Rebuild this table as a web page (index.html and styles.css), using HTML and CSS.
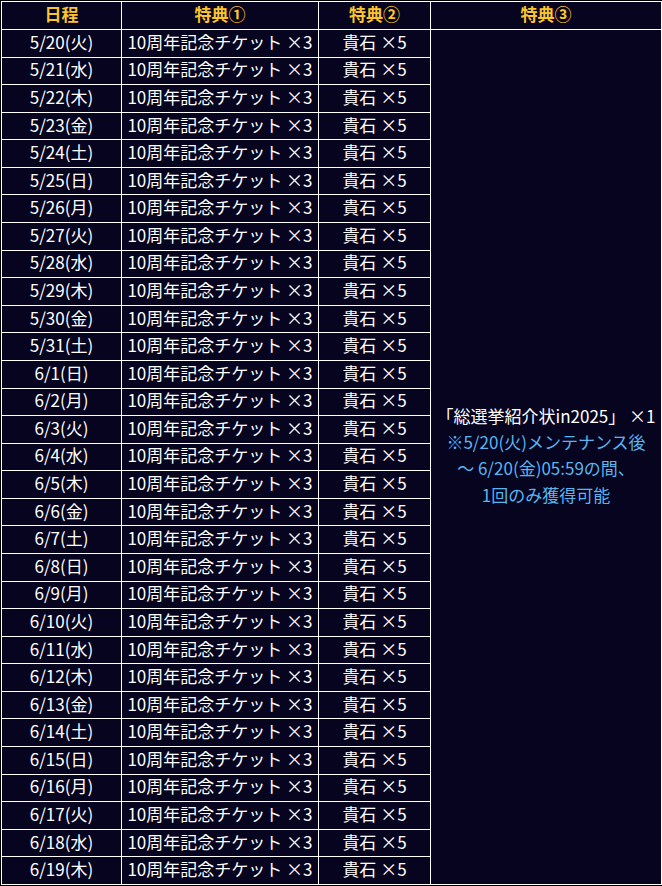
FILE: index.html
```html
<!DOCTYPE html>
<html lang="ja">
<head>
<meta charset="utf-8">
<title>特典一覧</title>
<link rel="stylesheet" href="styles.css">
</head>
<body>
<table class="bonus">
<colgroup><col class="c1"><col class="c2"><col class="c3"><col class="c4"></colgroup>
<thead>
<tr><th>日程</th><th>特典①</th><th>特典②</th><th>特典③</th></tr>
</thead>
<tbody>
<tr><td>5/20(火)</td><td>10周年記念チケット ×3</td><td>貴石 ×5</td><td class="special" rowspan="31"><span class="item">「総選挙紹介状in2025」 ×1</span><br><span class="note">※5/20(火)メンテナンス後<br>～ 6/20(金)05:59の間、<br>1回のみ獲得可能</span></td></tr>
<tr><td>5/21(水)</td><td>10周年記念チケット ×3</td><td>貴石 ×5</td></tr>
<tr><td>5/22(木)</td><td>10周年記念チケット ×3</td><td>貴石 ×5</td></tr>
<tr><td>5/23(金)</td><td>10周年記念チケット ×3</td><td>貴石 ×5</td></tr>
<tr><td>5/24(土)</td><td>10周年記念チケット ×3</td><td>貴石 ×5</td></tr>
<tr><td>5/25(日)</td><td>10周年記念チケット ×3</td><td>貴石 ×5</td></tr>
<tr><td>5/26(月)</td><td>10周年記念チケット ×3</td><td>貴石 ×5</td></tr>
<tr><td>5/27(火)</td><td>10周年記念チケット ×3</td><td>貴石 ×5</td></tr>
<tr><td>5/28(水)</td><td>10周年記念チケット ×3</td><td>貴石 ×5</td></tr>
<tr><td>5/29(木)</td><td>10周年記念チケット ×3</td><td>貴石 ×5</td></tr>
<tr><td>5/30(金)</td><td>10周年記念チケット ×3</td><td>貴石 ×5</td></tr>
<tr><td>5/31(土)</td><td>10周年記念チケット ×3</td><td>貴石 ×5</td></tr>
<tr><td>6/1(日)</td><td>10周年記念チケット ×3</td><td>貴石 ×5</td></tr>
<tr><td>6/2(月)</td><td>10周年記念チケット ×3</td><td>貴石 ×5</td></tr>
<tr><td>6/3(火)</td><td>10周年記念チケット ×3</td><td>貴石 ×5</td></tr>
<tr><td>6/4(水)</td><td>10周年記念チケット ×3</td><td>貴石 ×5</td></tr>
<tr><td>6/5(木)</td><td>10周年記念チケット ×3</td><td>貴石 ×5</td></tr>
<tr><td>6/6(金)</td><td>10周年記念チケット ×3</td><td>貴石 ×5</td></tr>
<tr><td>6/7(土)</td><td>10周年記念チケット ×3</td><td>貴石 ×5</td></tr>
<tr><td>6/8(日)</td><td>10周年記念チケット ×3</td><td>貴石 ×5</td></tr>
<tr><td>6/9(月)</td><td>10周年記念チケット ×3</td><td>貴石 ×5</td></tr>
<tr><td>6/10(火)</td><td>10周年記念チケット ×3</td><td>貴石 ×5</td></tr>
<tr><td>6/11(水)</td><td>10周年記念チケット ×3</td><td>貴石 ×5</td></tr>
<tr><td>6/12(木)</td><td>10周年記念チケット ×3</td><td>貴石 ×5</td></tr>
<tr><td>6/13(金)</td><td>10周年記念チケット ×3</td><td>貴石 ×5</td></tr>
<tr><td>6/14(土)</td><td>10周年記念チケット ×3</td><td>貴石 ×5</td></tr>
<tr><td>6/15(日)</td><td>10周年記念チケット ×3</td><td>貴石 ×5</td></tr>
<tr><td>6/16(月)</td><td>10周年記念チケット ×3</td><td>貴石 ×5</td></tr>
<tr><td>6/17(火)</td><td>10周年記念チケット ×3</td><td>貴石 ×5</td></tr>
<tr><td>6/18(水)</td><td>10周年記念チケット ×3</td><td>貴石 ×5</td></tr>
<tr><td>6/19(木)</td><td>10周年記念チケット ×3</td><td>貴石 ×5</td></tr>
</tbody>
</table>
</body>
</html>
```

FILE: styles.css
```css
html, body {
  margin: 0;
  padding: 0;
  background: #000000;
}

body {
  padding: 1px;
  font-family: "Noto Sans CJK JP", "Noto Sans", sans-serif;
}

.bonus {
  width: 660px;
  border-collapse: collapse;
  table-layout: fixed;
  background: #06041f;
  color: #ffffff;
  font-size: 17px;
}

.c1 { width: 120px; }
.c2 { width: 197px; }
.c3 { width: 112px; }
.c4 { width: 231px; }

.bonus th,
.bonus td {
  border: 1px solid #ffffff;
  padding: 0 0 3px;
  text-align: center;
  vertical-align: middle;
  line-height: 20px;
}

.bonus thead tr { height: 28px; }
.bonus tbody tr { height: 27.58px; }

.bonus th {
  color: #fdc52b;
  font-weight: bold;
}

.bonus td.special {
  line-height: 26.3px;
  font-size: 17px;
  padding-bottom: 3px;
}

.item { color: #ffffff; }
.note { color: #5ab4f0; }
```
